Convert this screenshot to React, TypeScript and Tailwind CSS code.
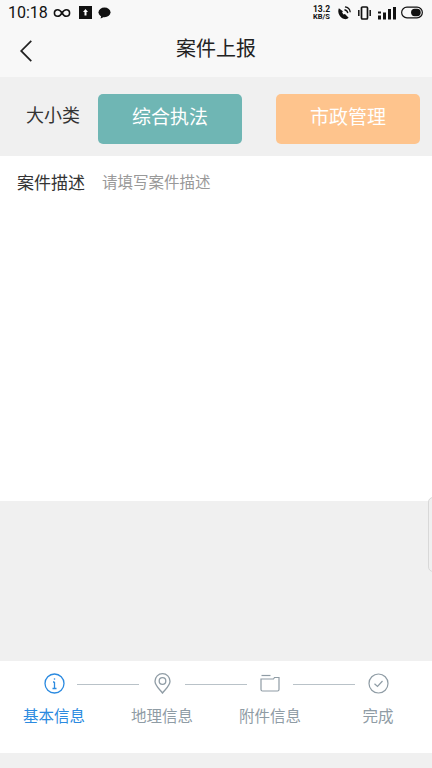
import React from "react";

const cjk = { fontFamily: '"Roboto","Noto Sans CJK SC",sans-serif' };

function Step({ label, active, children }: { label: string; active?: boolean; children: React.ReactNode }) {
  return (
    <div className="flex w-[46px] shrink-0 flex-col items-center">
      <div className="flex h-[24px] w-[24px] items-center justify-center">{children}</div>
      <div className={`mt-[11px] whitespace-nowrap text-[15.5px] leading-[22px] ${active ? "text-[#2b8ae0]" : "text-[#8f9ca5]"}`}>{label}</div>
    </div>
  );
}

function Line() {
  return <div className="mt-[13px] h-px w-[62px] shrink-0 bg-[#b9c2c8]" />;
}

export default function App() {
  return (
    <div className="relative flex h-[768px] w-[432px] flex-col overflow-hidden bg-[#f0f0f0]" style={cjk}>
      <div className="h-[77px] shrink-0 bg-[#f8f8f8]">
        <div className="flex h-[25px] items-center pl-[8px] pr-[9px] text-[#111]">
          <span className="w-[39px] text-[16px] leading-none">10:18</span>
          <svg width="18" height="10" viewBox="0 0 19 10" className="ml-[6px]" fill="none" stroke="#111" strokeWidth="1.700">
            <path d="M9.500 5C8 2.500 6.800 1.500 5 1.500a3.500 3.500 0 0 0 0 7c1.800 0 3-1 4.500-3.500s2.700-3.500 4.500-3.500a3.500 3.500 0 0 1 0 7c-1.800 0-3-1-4.500-3.500z" />
          </svg>
          <svg width="13" height="13" viewBox="0 0 13 13" className="ml-[8px]">
            <rect width="13" height="13" fill="#111" />
            <path d="M6.500 3 9 6H7.500v3.500h-2V6H4z" fill="#fff" />
          </svg>
          <svg width="13" height="12" viewBox="0 0 14 13" className="ml-[6px]">
            <ellipse cx="7" cy="5.800" rx="6.500" ry="5.300" fill="#111" />
            <path d="M3.500 9 2.800 12.500 7 10.500z" fill="#111" />
          </svg>
          <div className="flex-1" />
          <div className="mr-[7px] flex w-[17px] flex-col items-center text-[8.500px] font-bold leading-[8px]">
            <span>13.2</span>
            <span className="text-[7.500px]">KB/S</span>
          </div>
          <svg width="14" height="14" viewBox="0 0 15 15" className="mr-[7px]" fill="none">
            <path d="M2 2.500C0 7 3 13 8 14c2 .3 3.500-.5 4.500-1.500L8.500 8.500 7 9 5.500 7l.8-1.500z" fill="#111" />
            <path d="M8 4c2 .3 3.300 1.700 3.600 3.600M8.500 1c3.200.4 5.300 2.500 5.700 5.700" stroke="#111" strokeWidth="1.400" />
          </svg>
          <svg width="13" height="14" viewBox="0 0 13 14" className="mr-[7px]" fill="none" stroke="#111">
            <rect x="3.500" y="1" width="6" height="12" rx="1" strokeWidth="1.700" />
            <path d="M.8 4v6M12.200 4v6" strokeWidth="1.500" />
          </svg>
          <svg width="18" height="14" viewBox="0 0 18 14" className="mr-[5px]" fill="#111">
            <rect x="0" y="9.500" width="3" height="4" />
            <rect x="5" y="6.500" width="3" height="7" />
            <rect x="10" y="3" width="3" height="10.500" />
            <rect x="15" y="1" width="3" height="12.500" />
            <rect x="0" y="5.500" width="3" height="2" />
          </svg>
          <svg width="22" height="13" viewBox="0 0 24 13" fill="none">
            <rect x=".7" y=".7" width="22.600" height="11.600" rx="5.800" stroke="#111" strokeWidth="1.300" />
            <rect x="11" y="2.500" width="10.500" height="8" rx="4" fill="#111" />
          </svg>
        </div>
        <div className="relative flex h-[50px] items-center justify-center pb-[2px]">
          <svg width="14" height="23" viewBox="0 0 14 24" className="absolute left-[19px] top-[14px]" fill="none" stroke="#222" strokeWidth="1.800">
            <path d="M12.500 2 2 12.500 12.500 23" />
          </svg>
          <span className="text-[20px] leading-none text-[#222]">案件上报</span>
        </div>
      </div>

      <div className="flex h-[79px] shrink-0 items-center pl-[26px] pr-[12px] pt-[4px]">
        <span className="w-[72px] pb-[5px] text-[18px] leading-none text-[#333]">大小类</span>
        <div className="flex h-[50px] w-[144px] items-center justify-center rounded-[5px] bg-[#6fb6b4] text-[19px] text-white">综合执法</div>
        <div className="ml-[34px] flex h-[50px] w-[144px] items-center justify-center rounded-[5px] bg-[#fec48d] text-[19px] text-white">市政管理</div>
      </div>

      <div className="flex h-[345px] shrink-0 items-start bg-white pl-[17px] pt-[18px]">
        <span className="text-[17px] leading-[19px] text-[#333]">案件描述</span>
        <span className="ml-[17px] text-[15.500px] leading-[19px] text-[#999]">请填写案件描述</span>
      </div>

      <div className="flex-1" />

      <div className="mb-[15px] flex h-[92px] shrink-0 items-start bg-white pl-[31px] pt-[10px]">
        <Step label="基本信息" active>
          <svg width="21" height="21" viewBox="0 0 21 21" fill="none" stroke="#2b8ae0" strokeWidth="1.300">
            <circle cx="10.500" cy="10.500" r="9.500" />
            <path d="M10.500 9v6.500M8.500 15.500h4M9 9h1.500" />
            <circle cx="10.500" cy="6" r=".8" fill="#2b8ae0" stroke="none" />
          </svg>
        </Step>
        <Line />
        <Step label="地理信息">
          <svg width="17" height="21" viewBox="0 0 17 21" fill="none" stroke="#8f9ca5" strokeWidth="1.300">
            <path d="M8.500 20C6 16.500 1 12.800 1 8.200a7.500 7.500 0 0 1 15 0C16 12.800 11 16.500 8.500 20z" />
            <circle cx="8.500" cy="8" r="3.300" />
          </svg>
        </Step>
        <Line />
        <Step label="附件信息">
          <svg width="20" height="18" viewBox="0 0 20 18" fill="none" stroke="#8f9ca5" strokeWidth="1.200">
            <path d="M1 5h12.500l1-1.500H19v12a1.500 1.500 0 0 1-1.500 1.500h-15A1.500 1.500 0 0 1 1 15.500z" />
            <path d="M1.500 1.500h9" />
          </svg>
        </Step>
        <Line />
        <Step label="完成">
          <svg width="21" height="21" viewBox="0 0 21 21" fill="none" stroke="#8f9ca5" strokeWidth="1.200">
            <circle cx="10.500" cy="10.500" r="9.500" />
            <path d="M6.500 10.800 9.500 13.500 14.500 8" />
          </svg>
        </Step>
      </div>

      <div className="absolute right-[-8px] top-[497px] h-[75px] w-[12px] rounded-[5px] border border-[#d8d8d8] bg-[#f0f0f0]" />
    </div>
  );
}
